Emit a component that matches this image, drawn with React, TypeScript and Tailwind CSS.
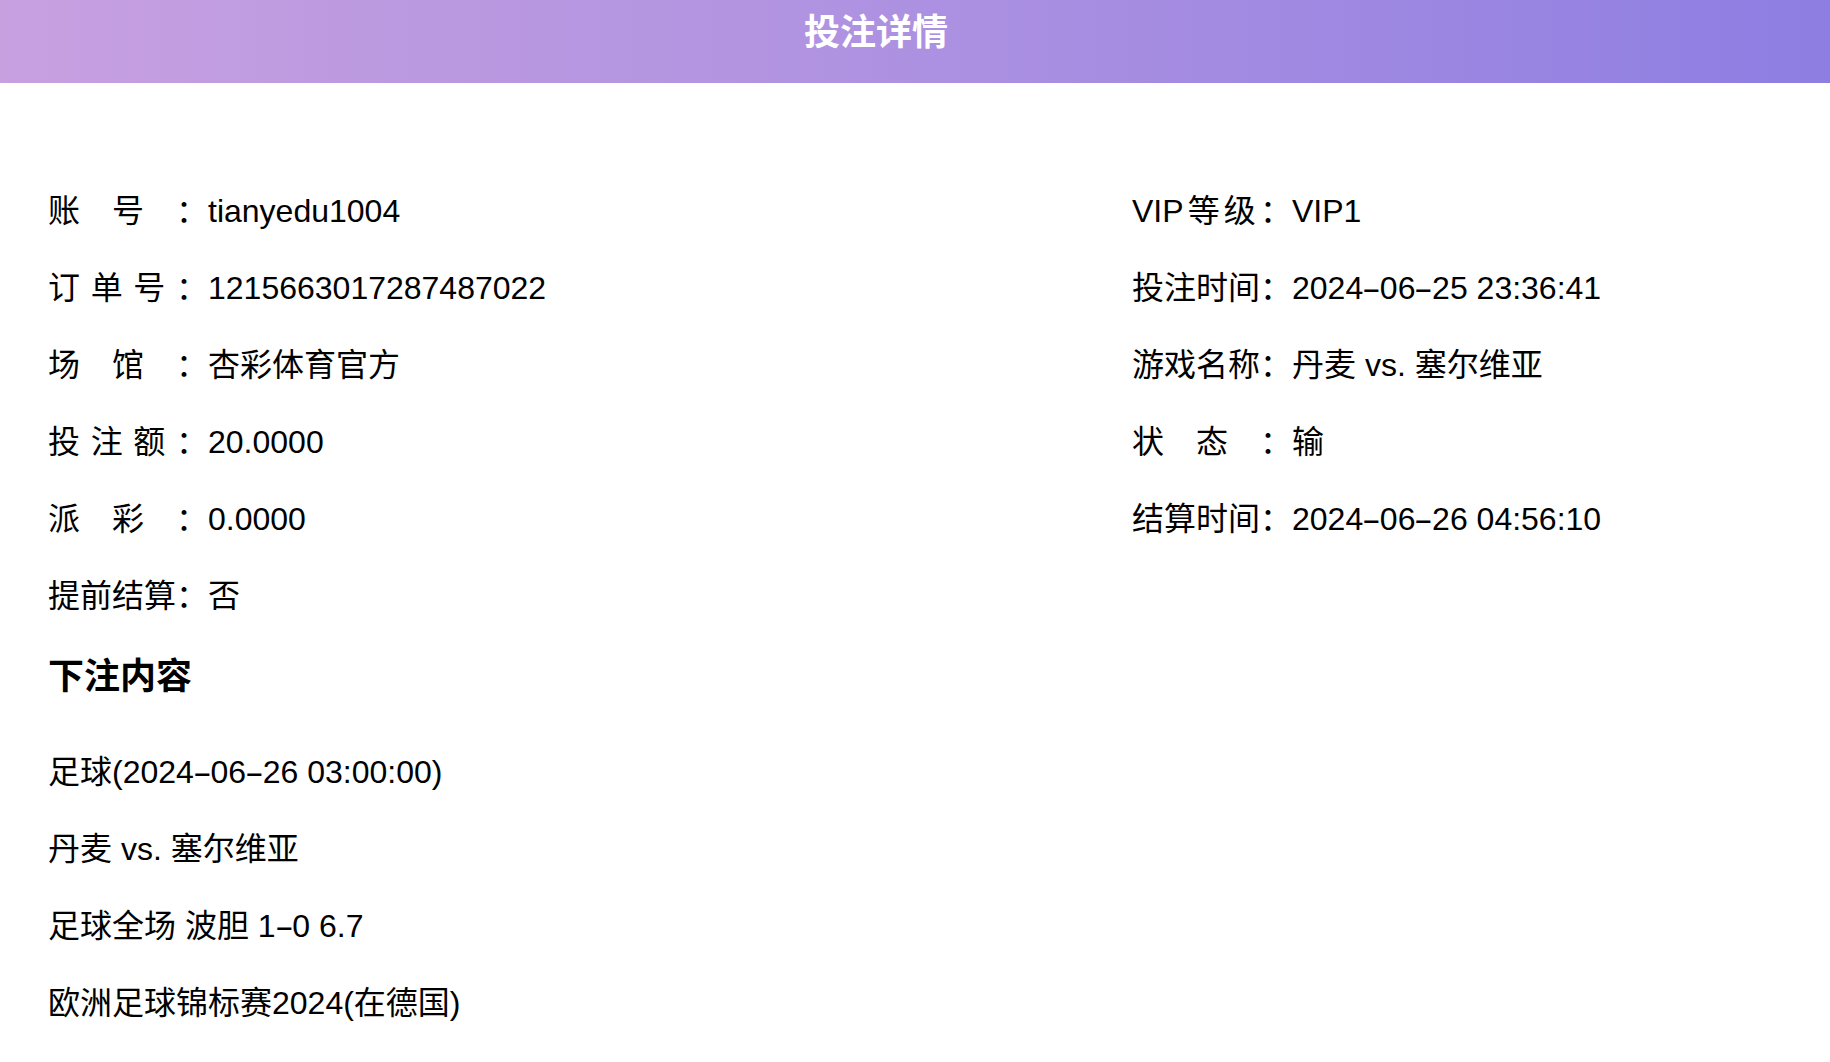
import React from "react";

type Field = { label: string; value: string };

const LEFT: Field[] = [
  { label: "账号：", value: "tianyedu1004" },
  { label: "订单号：", value: "1215663017287487022" },
  { label: "场馆：", value: "杏彩体育官方" },
  { label: "投注额：", value: "20.0000" },
  { label: "派彩：", value: "0.0000" },
  { label: "提前结算：", value: "否" },
];

const RIGHT: Field[] = [
  { label: "VIP等级：", value: "VIP1" },
  { label: "投注时间：", value: "2024-06-25 23:36:41" },
  { label: "游戏名称：", value: "丹麦 vs. 塞尔维亚" },
  { label: "状态：", value: "输" },
  { label: "结算时间：", value: "2024-06-26 04:56:10" },
];

const CONTENT = [
  "足球(2024-06-26 03:00:00)",
  "丹麦 vs. 塞尔维亚",
  "足球全场 波胆 1-0 6.7",
  "欧洲足球锦标赛2024(在德国)",
];

// 连字符在原图里是较长的横线，拉宽一点
const Dashed = ({ text }: { text: string }) => {
  const parts = text.split("-");
  return (
    <>
      {parts.map((p, i) => (
        <React.Fragment key={i}>
          {i > 0 && <span className="inline-block px-[3px] scale-x-[1.8]">-</span>}
          {p}
        </React.Fragment>
      ))}
    </>
  );
};

const Row = ({ label, value }: Field) => (
  <div className="h-[77px] flex items-center whitespace-nowrap">
    <span className="inline-block w-[160px] shrink-0 [text-align-last:justify]">{label}</span>
    <span>
      <Dashed text={value} />
    </span>
  </div>
);

export default function App() {
  return (
    <div className="min-h-screen w-full bg-white text-black text-[32px] leading-[48px] font-['Liberation_Sans','Noto_Sans_CJK_SC',sans-serif]">
      {/* 顶部标题栏 */}
      <header className="h-[83px] w-full bg-linear-to-r from-[#c7a0e0] via-[#ad91e1] to-[#8e7ee2] flex items-center justify-center pr-[78px] pb-[17px]">
        <h1 className="text-[36px] font-bold text-white leading-[48px]">投注详情</h1>
      </header>

      <main className="pl-[48px] pt-[89px]">
        <div className="grid grid-cols-[1084px_1fr]">
          <div className="flex flex-col">
            {LEFT.map((f) => (
              <Row key={f.label} {...f} />
            ))}
          </div>
          <div className="flex flex-col">
            {RIGHT.map((f) => (
              <Row key={f.label} {...f} />
            ))}
          </div>
        </div>

        <h2 className="h-[77px] mt-[4px] flex items-center text-[36px] font-bold">下注内容</h2>

        <div className="mt-[18px] flex flex-col">
          {CONTENT.map((line) => (
            <div key={line} className="h-[77px] flex items-center whitespace-nowrap">
              <Dashed text={line} />
            </div>
          ))}
        </div>
      </main>
    </div>
  );
}
